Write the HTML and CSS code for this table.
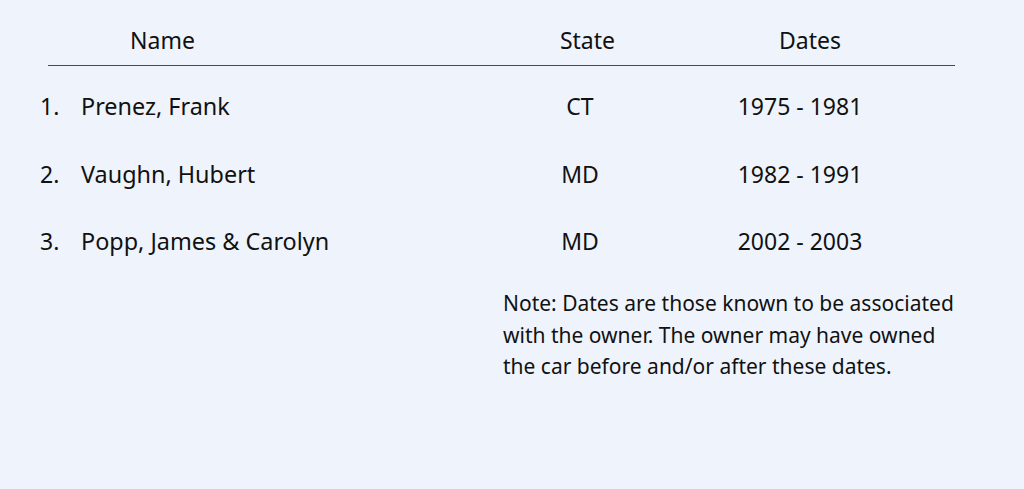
FILE: index.html
```html
<!DOCTYPE html>
<html lang="en">
<head>
<meta charset="utf-8">
<title>Owners</title>
<link rel="stylesheet" href="styles.css">
</head>
<body>
<div class="page">
  <div class="head">
    <div class="h-name">Name</div>
    <div class="h-state">State</div>
    <div class="h-dates">Dates</div>
  </div>
  <ol class="owners">
    <li class="row"><span class="num">1.</span><span class="name">Prenez, Frank</span><span class="state">CT</span><span class="dates">1975 - 1981</span></li>
    <li class="row"><span class="num">2.</span><span class="name">Vaughn, Hubert</span><span class="state">MD</span><span class="dates">1982 - 1991</span></li>
    <li class="row"><span class="num">3.</span><span class="name">Popp, James &amp; Carolyn</span><span class="state">MD</span><span class="dates">2002 - 2003</span></li>
  </ol>
  <p class="note">Note: Dates are those known to be associated with the owner. The owner may have owned the car before and/or after these dates.</p>
</div>
</body>
</html>
```

FILE: styles.css
```css
html, body {
  margin: 0;
  padding: 0;
  background: #eff4fc;
}
body {
  font-family: "Noto Sans", "Open Sans", sans-serif;
  font-weight: 420;
  color: #111;
  width: 1024px;
  height: 489px;
  overflow: hidden;
}
.page {
  padding-top: 25px;
}
.head {
  margin-left: 48px;
  width: 907px;
  display: grid;
  grid-template-columns: 462px 155px 290px;
  font-size: 23px;
  line-height: 30px;
  padding-bottom: 10px;
  border-bottom: 1px solid #4a4a4a;
}
.h-name {
  padding-left: 82px;
}
.h-state, .h-dates {
  text-align: center;
}
.owners {
  list-style: none;
  margin: 25px 0 0 40px;
  padding: 0;
  display: flex;
  flex-direction: column;
  gap: 37.5px;
  font-size: 23px;
  line-height: 30px;
}
.row {
  display: grid;
  grid-template-columns: 41px 424px 150px 290px;
}
.name {
  font-size: 23.4px;
}
.state, .dates {
  text-align: center;
}
.note {
  margin: 32px 0 0 503px;
  width: 460px;
  font-size: 21px;
  line-height: 31.5px;
}
```
